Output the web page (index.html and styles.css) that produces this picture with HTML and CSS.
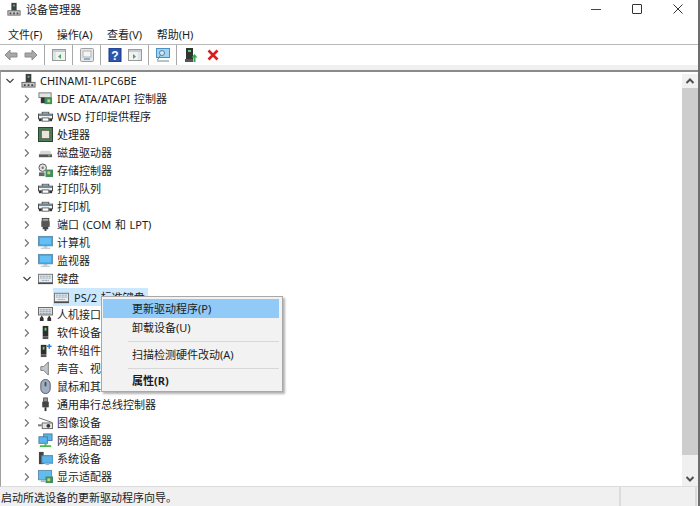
FILE: index.html
```html
<!DOCTYPE html>
<html lang="zh-CN">
<head>
<meta charset="utf-8">
<title>设备管理器</title>
<link rel="stylesheet" href="styles.css">
</head>
<body>
<svg class="defs" width="0" height="0">
  <symbol id="pc" viewBox="0 0 16 16"><rect x="5" y="1" width="6" height="9" fill="#3c4040"/><rect x="7" y="3" width="2" height="2" fill="#5fbf6f"/><rect x="1" y="10" width="14" height="5" fill="#c8c8c8" stroke="#666"/><rect x="3" y="12" width="2" height="2" fill="#444"/><rect x="7" y="12" width="2" height="2" fill="#444"/><rect x="11" y="12" width="2" height="2" fill="#444"/></symbol>
  <symbol id="ide" viewBox="0 0 16 16"><rect x="1" y="2" width="13" height="5" fill="#e4e4e4" stroke="#777"/><rect x="3" y="7" width="5" height="6" fill="#333"/><rect x="7" y="7" width="8" height="7" fill="#3f8f5f"/><rect x="10" y="9" width="3" height="3" fill="#c8d870"/></symbol>
  <symbol id="printer" viewBox="0 0 16 16"><rect x="4.500" y="3.500" width="7" height="2" fill="#fff" stroke="#555"/><rect x=".5" y="5.500" width="15" height="5" fill="#eef2f4" stroke="#444"/><rect x="1" y="6" width="14" height="1.500" fill="#5a93b8"/><rect x="1" y="10.500" width="3" height="2.500" fill="#333"/><rect x="12" y="10.500" width="3" height="2.500" fill="#333"/><rect x="4.500" y="9.500" width="7" height="3.500" fill="#fff" stroke="#666"/></symbol>
  <symbol id="cpu" viewBox="0 0 16 16"><rect x=".5" y=".5" width="15" height="15" fill="#4d7d55" stroke="#1f3f2a"/><rect x="3.500" y="3.500" width="9" height="9" fill="#e9e6d8" stroke="#5a5a50"/></symbol>
  <symbol id="disk" viewBox="0 0 16 16"><path d="M3 6h10l2 4H1z" fill="#d8d8d8"/><rect x="1" y="10" width="14" height="3" fill="#555"/><rect x="11" y="11" width="2" height="1" fill="#8fd08f"/></symbol>
  <symbol id="storage" viewBox="0 0 16 16"><circle cx="5" cy="5" r="4" fill="#e3e3e3" stroke="#555"/><circle cx="5" cy="5" r="1.300" fill="#777"/><rect x="1" y="10" width="6" height="4" fill="#666"/><rect x="8" y="7" width="8" height="8" fill="#3f8f5f"/><rect x="10" y="9" width="3" height="3" fill="#c8d870"/></symbol>
  <symbol id="port" viewBox="0 0 16 16"><rect x="4.500" y="1.500" width="7" height="3" fill="#aaa" stroke="#444"/><rect x="3.500" y="4.500" width="9" height="6" fill="#555"/><path d="M5 10h6v3H9v2H7v-2H5z" fill="#444"/></symbol>
  <symbol id="monitor" viewBox="0 0 16 16"><rect x=".5" y="1.500" width="15" height="10" fill="#3fa4e4" stroke="#5f8fb0"/><rect x="2" y="3" width="12" height="7" fill="#64c0f4"/><rect x="6" y="12" width="4" height="1.500" fill="#aab4bc"/><rect x="3" y="13.500" width="10" height="1.500" fill="#c8d0d6"/></symbol>
  <symbol id="kbd" viewBox="0 0 16 12"><rect x=".5" y="1.500" width="15" height="9" fill="#e6eef4" stroke="#6f7478"/><path d="M2 3.500h12M2 5.500h12M4 8h8" stroke="#7f8b94" stroke-dasharray="1 .6"/><rect x="0" y="10.500" width="16" height="1.500" fill="#4c4c4c"/></symbol>
  <symbol id="hid" viewBox="0 0 16 16"><rect x=".5" y=".5" width="15" height="8" fill="#dce0e4" stroke="#666"/><path d="M2 3h12M2 5h12M2 7h12" stroke="#7f8b94" stroke-dasharray="1 .6"/><path d="M2 15v-3l2-3 2 3v3zM10 15v-3l2-3 2 3v3z" fill="#333"/></symbol>
  <symbol id="soft" viewBox="0 0 16 16"><rect x="5" y="1" width="6" height="11" fill="#2f2f2f"/><rect x="7" y="3" width="2" height="3" fill="#5fd070"/><rect x="5" y="12" width="6" height="3" fill="#555"/></symbol>
  <symbol id="comp" viewBox="0 0 16 16"><rect x="3" y="2" width="6" height="10" fill="#2f2f2f"/><rect x="5" y="4" width="2" height="3" fill="#5fd070"/><rect x="3" y="12" width="6" height="3" fill="#555"/><path d="M12 1v5M9.500 3.500h5" stroke="#2f7fd0" stroke-width="1.500"/></symbol>
  <symbol id="sound" viewBox="0 0 16 16"><path d="M3 6h3l5-5v14l-5-5H3z" fill="#c4c8cc" stroke="#777"/></symbol>
  <symbol id="mouse" viewBox="0 0 16 16"><rect x="3" y=".5" width="10" height="15" rx="5" fill="#9fb0c0" stroke="#556"/><rect x="7" y="3" width="2" height="5" rx="1" fill="#44505c"/></symbol>
  <symbol id="usb" viewBox="0 0 16 16"><rect x="6" y="1" width="4" height="4" fill="#999" stroke="#555"/><rect x="4.500" y="5" width="7" height="6" fill="#444"/><rect x="7" y="11" width="2" height="4" fill="#333"/></symbol>
  <symbol id="camera" viewBox="0 0 16 16"><path d="M1 3l14 5" stroke="#666"/><rect x="4.500" y="8.500" width="11" height="6" fill="#e4e4e4" stroke="#666"/><circle cx="11" cy="11.500" r="2" fill="#333"/><rect x="0" y="10" width="4" height="2" fill="#777"/></symbol>
  <symbol id="net" viewBox="0 0 16 16"><rect x="6" y="1" width="9" height="7" fill="#5ab4ec" stroke="#4a7ea4"/><rect x="1" y="4" width="9" height="7" fill="#5ab4ec" stroke="#4a7ea4"/><path d="M2 14h12M8 11v4" stroke="#4fb84f" stroke-width="2"/></symbol>
  <symbol id="sys" viewBox="0 0 16 16"><rect x="1" y="1" width="5" height="13" fill="#444"/><rect x="4" y="5" width="12" height="8" fill="#5ab4ec" stroke="#4a7ea4"/><rect x="8" y="13" width="4" height="2" fill="#aab4bc"/></symbol>
  <symbol id="disp" viewBox="0 0 16 16"><rect x=".5" y="1.500" width="14" height="10" fill="#62bcf0" stroke="#5f8fb0"/><rect x="8" y="8" width="8" height="7" fill="#3f8f5f"/><rect x="10" y="10" width="3" height="3" fill="#c8d870"/><rect x="3" y="12" width="5" height="2" fill="#aab4bc"/></symbol>
</svg>

<div class="window">
  <header class="titlebar">
    <svg class="title-icon"><use href="#pc"/></svg>
    <span class="title-text">设备管理器</span>
    <div class="controls">
      <svg class="ctl" viewBox="0 0 10 10"><path d="M0 5.500h10" stroke="#444"/></svg>
      <svg class="ctl" viewBox="0 0 10 10"><rect x=".5" y=".5" width="9" height="9" rx=".5" fill="none" stroke="#333"/></svg>
      <svg class="ctl" viewBox="0 0 10 10"><path d="M.5 .5l9 9M9.500 .5l-9 9" stroke="#333"/></svg>
    </div>
  </header>
  <nav class="menubar">
    <span>文件(F)</span><span>操作(A)</span><span>查看(V)</span><span>帮助(H)</span>
  </nav>
  <div class="toolbar">
    <svg class="tool arrow" viewBox="0 0 14 12"><path d="M1 6l5-5v3h7v4H6v3z" fill="#a8a8a8" stroke="#8c8c8c"/></svg>
    <svg class="tool arrow" viewBox="0 0 14 12"><path d="M13 6L8 1v3H1v4h7v3z" fill="#a8a8a8" stroke="#8c8c8c"/></svg>
    <i class="sep"></i>
    <svg class="tool" viewBox="0 0 14 14"><rect x=".5" y="1.500" width="13" height="11" fill="#f2f2f2" stroke="#9a9a9a"/><rect x="1" y="2" width="12" height="2" fill="#c6ccd2"/><rect x="1" y="4" width="3" height="8" fill="#dce4ea"/><path d="M9 6v5L6 8.500z" fill="#4aa85a"/></svg>
    <i class="sep"></i>
    <svg class="tool" viewBox="0 0 14 14"><rect x=".5" y=".5" width="13" height="13" rx="1" fill="#e6e6e6" stroke="#a0a0a0"/><rect x="3" y="3" width="8" height="6" fill="#f4f4f4" stroke="#b4b4b4"/><rect x="4" y="10" width="6" height="2" fill="#7fb4d8"/></svg>
    <i class="sep"></i>
    <svg class="tool" viewBox="0 0 14 14"><rect x="1" y="0" width="12" height="14" fill="#2c55b0" stroke="#1c3a80"/><text x="7" y="11.500" class="help">?</text></svg>
    <svg class="tool" viewBox="0 0 14 14"><rect x=".5" y="1.500" width="13" height="11" fill="#f2f2f2" stroke="#9a9a9a"/><rect x="1" y="2" width="12" height="2" fill="#c6ccd2"/><rect x="10" y="4" width="3" height="8" fill="#dce4ea"/><path d="M5 6v5l3-2.500z" fill="#4aa85a"/></svg>
    <i class="sep"></i>
    <svg class="tool" viewBox="0 0 14 14"><rect x=".5" y=".5" width="13" height="9" fill="#9fd4f4" stroke="#4a90c0"/><circle cx="6" cy="5" r="2.500" fill="#d0ecfc" stroke="#5a7f98"/><path d="M4.500 7l-3 5M1 13h12" stroke="#6a8a9a"/></svg>
    <i class="sep"></i>
    <svg class="tool" viewBox="0 0 14 14"><rect x="2" y="0" width="7" height="11" fill="#333"/><rect x="4" y="2" width="3" height="2" fill="#5fd070"/><rect x="1" y="11" width="8" height="3" fill="#555"/><path d="M10.500 6l3 3.500h-2V14h-2V9.500h-2z" fill="#2fae4a"/></svg>
    <svg class="tool remove" viewBox="0 0 12 12"><path d="M1.500 1.500l9 9M10.500 1.500l-9 9" stroke="#d81e1e" stroke-width="2.600"/></svg>
  </div>
  <main class="content">
    <div class="tree">
      <div class="row root"><svg class="chev" viewBox="0 0 8 8"><path d="M.5 2l3.500 3.500L7.500 2" class="cs"/></svg><svg class="ic"><use href="#pc"/></svg><span class="label">CHINAMI-1LPC6BE</span></div>
      <div class="row"><svg class="chev" viewBox="0 0 8 8"><path d="M2 .5L5.500 4 2 7.500" class="cl"/></svg><svg class="ic"><use href="#ide"/></svg><span class="label">IDE ATA/ATAPI 控制器</span></div>
      <div class="row"><svg class="chev" viewBox="0 0 8 8"><path d="M2 .5L5.500 4 2 7.500" class="cl"/></svg><svg class="ic"><use href="#printer"/></svg><span class="label">WSD 打印提供程序</span></div>
      <div class="row"><svg class="chev" viewBox="0 0 8 8"><path d="M2 .5L5.500 4 2 7.500" class="cl"/></svg><svg class="ic"><use href="#cpu"/></svg><span class="label">处理器</span></div>
      <div class="row"><svg class="chev" viewBox="0 0 8 8"><path d="M2 .5L5.500 4 2 7.500" class="cl"/></svg><svg class="ic"><use href="#disk"/></svg><span class="label">磁盘驱动器</span></div>
      <div class="row"><svg class="chev" viewBox="0 0 8 8"><path d="M2 .5L5.500 4 2 7.500" class="cl"/></svg><svg class="ic"><use href="#storage"/></svg><span class="label">存储控制器</span></div>
      <div class="row"><svg class="chev" viewBox="0 0 8 8"><path d="M2 .5L5.500 4 2 7.500" class="cl"/></svg><svg class="ic"><use href="#printer"/></svg><span class="label">打印队列</span></div>
      <div class="row"><svg class="chev" viewBox="0 0 8 8"><path d="M2 .5L5.500 4 2 7.500" class="cl"/></svg><svg class="ic"><use href="#printer"/></svg><span class="label">打印机</span></div>
      <div class="row"><svg class="chev" viewBox="0 0 8 8"><path d="M2 .5L5.500 4 2 7.500" class="cl"/></svg><svg class="ic"><use href="#port"/></svg><span class="label">端口 (COM 和 LPT)</span></div>
      <div class="row"><svg class="chev" viewBox="0 0 8 8"><path d="M2 .5L5.500 4 2 7.500" class="cl"/></svg><svg class="ic"><use href="#monitor"/></svg><span class="label">计算机</span></div>
      <div class="row"><svg class="chev" viewBox="0 0 8 8"><path d="M2 .5L5.500 4 2 7.500" class="cl"/></svg><svg class="ic"><use href="#monitor"/></svg><span class="label">监视器</span></div>
      <div class="row"><svg class="chev" viewBox="0 0 8 8"><path d="M.5 2l3.500 3.500L7.500 2" class="cs"/></svg><svg class="ic"><use href="#kbd"/></svg><span class="label">键盘</span></div>
      <div class="row child"><span class="selected"><svg class="ic"><use href="#kbd"/></svg><span class="label">PS/2 标准键盘</span></span></div>
      <div class="row"><svg class="chev" viewBox="0 0 8 8"><path d="M2 .5L5.500 4 2 7.500" class="cl"/></svg><svg class="ic"><use href="#hid"/></svg><span class="label">人机接口设备</span></div>
      <div class="row"><svg class="chev" viewBox="0 0 8 8"><path d="M2 .5L5.500 4 2 7.500" class="cl"/></svg><svg class="ic"><use href="#soft"/></svg><span class="label">软件设备</span></div>
      <div class="row"><svg class="chev" viewBox="0 0 8 8"><path d="M2 .5L5.500 4 2 7.500" class="cl"/></svg><svg class="ic"><use href="#comp"/></svg><span class="label">软件组件</span></div>
      <div class="row"><svg class="chev" viewBox="0 0 8 8"><path d="M2 .5L5.500 4 2 7.500" class="cl"/></svg><svg class="ic"><use href="#sound"/></svg><span class="label">声音、视频和游戏控制器</span></div>
      <div class="row"><svg class="chev" viewBox="0 0 8 8"><path d="M2 .5L5.500 4 2 7.500" class="cl"/></svg><svg class="ic"><use href="#mouse"/></svg><span class="label">鼠标和其他指针设备</span></div>
      <div class="row"><svg class="chev" viewBox="0 0 8 8"><path d="M2 .5L5.500 4 2 7.500" class="cl"/></svg><svg class="ic"><use href="#usb"/></svg><span class="label">通用串行总线控制器</span></div>
      <div class="row"><svg class="chev" viewBox="0 0 8 8"><path d="M2 .5L5.500 4 2 7.500" class="cl"/></svg><svg class="ic"><use href="#camera"/></svg><span class="label">图像设备</span></div>
      <div class="row"><svg class="chev" viewBox="0 0 8 8"><path d="M2 .5L5.500 4 2 7.500" class="cl"/></svg><svg class="ic"><use href="#net"/></svg><span class="label">网络适配器</span></div>
      <div class="row"><svg class="chev" viewBox="0 0 8 8"><path d="M2 .5L5.500 4 2 7.500" class="cl"/></svg><svg class="ic"><use href="#sys"/></svg><span class="label">系统设备</span></div>
      <div class="row"><svg class="chev" viewBox="0 0 8 8"><path d="M2 .5L5.500 4 2 7.500" class="cl"/></svg><svg class="ic"><use href="#disp"/></svg><span class="label">显示适配器</span></div>
    </div>
    <div class="scrollbar">
      <svg class="sb-btn" viewBox="0 0 16 14"><path d="M4.500 9L8 5.500 11.500 9" fill="none" stroke="#505050" stroke-width="2"/></svg>
      <div class="sb-track"><div class="sb-thumb"></div></div>
      <svg class="sb-btn" viewBox="0 0 16 14"><path d="M4.500 5L8 8.500 11.500 5" fill="none" stroke="#505050" stroke-width="2"/></svg>
    </div>
  </main>
  <footer class="statusbar">
    <span class="status-main">启动所选设备的更新驱动程序向导。</span>
    <span class="status-cell"></span>
    <span class="status-end"></span>
  </footer>
</div>

<div class="menu">
  <div class="item active">更新驱动程序(P)</div>
  <div class="item">卸载设备(U)</div>
  <div class="divider"></div>
  <div class="item">扫描检测硬件改动(A)</div>
  <div class="divider"></div>
  <div class="item strong">属性(R)</div>
</div>
</body>
</html>
```

FILE: styles.css
```css
*, *::before, *::after { box-sizing: border-box; }
html, body {
  margin: 0;
  padding: 0;
  width: 700px;
  height: 506px;
  overflow: hidden;
  background: #fff;
}
body {
  position: relative;
  font-family: "Noto Sans", "Noto Sans CJK SC", sans-serif;
  font-size: 11px;
  color: #1c1c1c;
}
.defs { position: absolute; }
.window {
  width: 700px;
  height: 506px;
  display: flex;
  flex-direction: column;
  border-right: 2px solid #6e6e6e;
  background: #fff;
}
.titlebar {
  height: 25px;
  display: flex;
  align-items: center;
  padding-left: 7px;
  padding-bottom: 7px;
  flex: none;
}
.title-icon { width: 14px; height: 14px; }
.title-text { margin-left: 5px; }
.controls {
  margin-left: auto;
  display: flex;
  gap: 31px;
  padding-right: 15px;
}
.ctl { width: 10px; height: 10px; display: block; }
.menubar {
  height: 20px;
  display: flex;
  align-items: center;
  gap: 14.500px;
  padding-left: 8px;
  padding-bottom: 2px;
  border-bottom: 1px solid #b9b9b9;
  flex: none;
}
.toolbar {
  height: 25px;
  display: flex;
  align-items: center;
  padding-left: 4px;
  flex: none;
  background: #fff;
  border-bottom: 5px solid #f0f0f0;
}
.tool { width: 14px; height: 14px; margin-right: 6px; flex: none; }
.remove { width: 12px; height: 12px; margin-left: 3px; }
.sep {
  width: 1px;
  height: 20px;
  background: #a8a8a8;
  margin: 0 7px 0 0;
  flex: none;
}
.help {
  font-family: "Liberation Sans", sans-serif;
  font-weight: 700;
  font-size: 12px;
  fill: #fff;
  text-anchor: middle;
}
.content {
  flex: 1;
  min-height: 0;
  display: flex;
  border-top: 2px solid #8a8a8a;
  border-left: 1px solid #a0a0a0;
  border-bottom: 1px solid #dcdcdc;
}
.tree {
  flex: 1;
  min-width: 0;
  overflow: hidden;
}
.row {
  height: 18px;
  display: flex;
  align-items: center;
  padding-left: 22px;
  padding-bottom: 1px;
  white-space: nowrap;
}
.chev { width: 8px; height: 8px; flex: none; }
.cl, .cs { fill: none; stroke: #6f6f6f; stroke-width: 1.100; }
.cs { stroke: #3c3c3c; }
.ic { width: 15px; height: 15px; margin-left: 7px; flex: none; }
.label { margin-left: 4px; margin-bottom: 1px; white-space: nowrap; word-spacing: .8px; }
.root { padding-left: 5px; }
.child { padding-left: 52px; padding-bottom: 0; }
.selected {
  display: flex;
  align-items: center;
  height: 18px;
  background: #cce8ff;
  padding: 0 3px 0 1px;
}
.selected .ic { margin-left: 0; }
.selected .label { margin-left: 5px; }
.scrollbar {
  width: 16px;
  flex: none;
  display: flex;
  flex-direction: column;
  margin-top: 2px;
  background: #f0f0f0;
}
.sb-btn { width: 16px; height: 14px; flex: none; }
.sb-track { flex: 1; min-height: 0; padding-bottom: 17px; }
.sb-thumb { height: 100%; background: #cdcdcd; }
.statusbar {
  height: 19px;
  flex: none;
  display: flex;
  align-items: center;
  background: #f0f0f0;
}
.status-main { flex: 1; padding-left: 1px; }
.status-cell {
  width: 76px;
  height: 100%;
  border-left: 2px solid #dcdcdc;
}
.status-end {
  width: 3px;
  height: 100%;
  border-left: 2px solid #dcdcdc;
}
.menu {
  position: absolute;
  left: 101px;
  top: 296px;
  width: 182px;
  height: 96px;
  padding: 2px 3px 0 1px;
  background: #f2f2f2;
  border: 1px solid #a8a8a8;
  box-shadow: 2px 2px 2px rgba(0, 0, 0, .3);
}
.item {
  height: 19px;
  line-height: 19px;
  padding-left: 29px;
}
.item.active { background: #91c9f7; }
.item.strong { font-weight: 700; line-height: 17px; }
.divider {
  height: 1px;
  background: #d7d7d7;
  margin: 4px 0 3px 25px;
}
```
